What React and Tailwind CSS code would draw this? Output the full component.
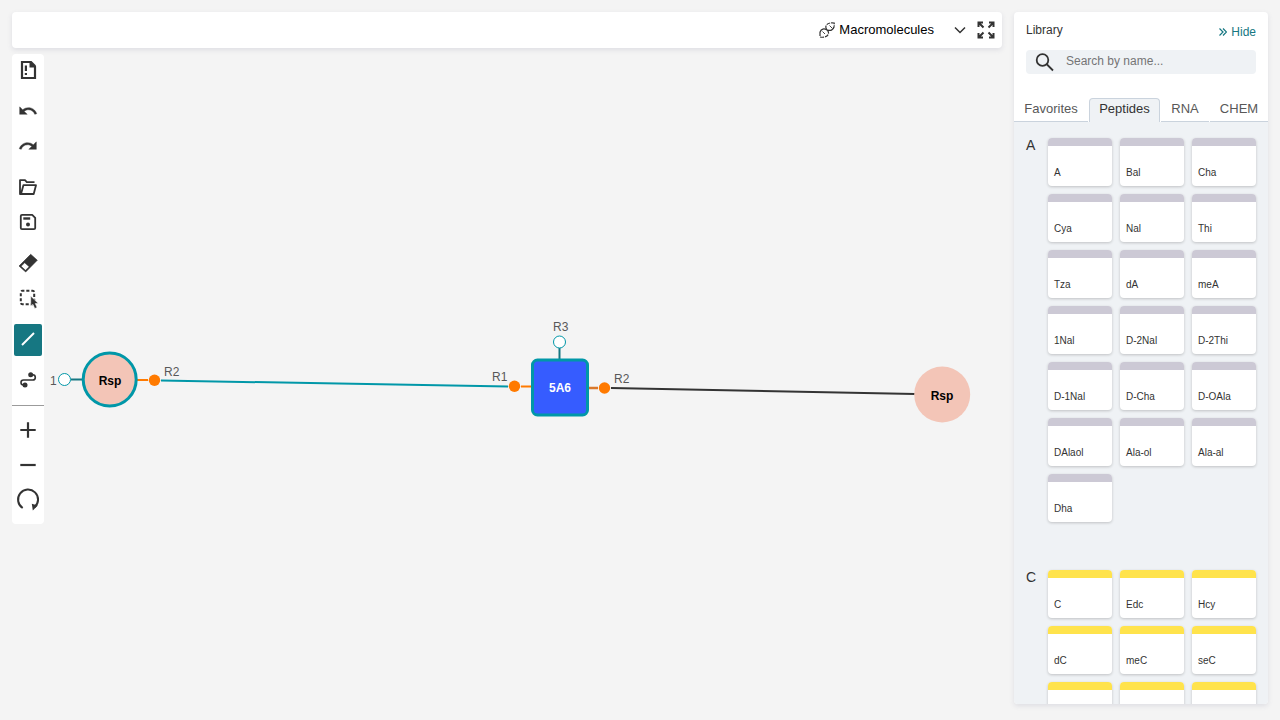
import React from "react";

const sections = [
  {
    letter: "A",
    bar: "bg-[#ccc9d5]",
    items: ["A", "Bal", "Cha", "Cya", "Nal", "Thi", "Tza", "dA", "meA", "1Nal", "D-2Nal", "D-2Thi", "D-1Nal", "D-Cha", "D-OAla", "DAlaol", "Ala-ol", "Ala-al", "Dha"],
  },
  {
    letter: "C",
    bar: "bg-[#ffe34c]",
    items: ["C", "Edc", "Hcy", "dC", "meC", "seC", "", "", ""],
  },
];

function Icon({ children, className = "size-6" }) {
  return (
    <svg viewBox="0 0 24 24" className={className} fill="none" stroke="currentColor" strokeWidth="2" aria-hidden="true">
      {children}
    </svg>
  );
}

function Tool({ label, active, children }) {
  return (
    <button
      type="button"
      aria-label={label}
      aria-pressed={active}
      className={
        active
          ? "flex h-8 w-7 items-center justify-center rounded-xs bg-[#167782] text-white"
          : "flex h-8 w-7 items-center justify-center rounded-xs text-[#333333]"
      }
    >
      {children}
    </button>
  );
}

function Group({ children }) {
  return <div className="flex flex-col items-center gap-[3px]">{children}</div>;
}

function Toolbar() {
  return (
    <nav aria-label="Tools" className="flex w-8 shrink-0 flex-col gap-[9px] self-start rounded bg-white pb-2">
      <Group>
        <Tool label="Clear canvas">
          <Icon>
            <path d="M14.500 4H6v16h13V8.500" strokeWidth="2.200" />
            <path d="M13.500 3h2l4.500 4.500V9.500h-6.500z" fill="currentColor" stroke="none" />
            <path d="M9.900 7.500v5.500M9.900 15v2" strokeWidth="2.200" />
          </Icon>
        </Tool>
      </Group>
      <Group>
        <Tool label="Undo">
          <Icon className="size-5">
            <path fill="currentColor" strokeWidth="0.500" d="M12.5 8c-2.65 0-5.05.99-6.9 2.6L2 7v9h9l-3.62-3.62c1.39-1.16 3.16-1.88 5.12-1.88 3.54 0 6.55 2.31 7.6 5.5l2.37-.78C21.08 11.03 17.15 8 12.5 8z" />
          </Icon>
        </Tool>
        <Tool label="Redo">
          <Icon className="size-5">
            <path fill="currentColor" strokeWidth="0.500" d="M18.4 10.600C16.550 8.990 14.150 8 11.500 8c-4.650 0-8.580 3.030-9.960 7.220L3.900 16c1.050-3.190 4.050-5.500 7.600-5.500 1.950 0 3.730.720 5.120 1.880L13 16h9V7l-3.600 3.600z" />
          </Icon>
        </Tool>
      </Group>
      <Group>
        <Tool label="Open">
          <Icon>
            <path strokeWidth="1.800" strokeLinejoin="round" d="M5 19H4V5.200h5l1.800 2H18.500M7.400 10.200H20L17.700 19H5z" />
          </Icon>
        </Tool>
        <Tool label="Save">
          <Icon>
            <path strokeWidth="1.800" strokeLinejoin="round" d="M6 4.800h10.200l3 3V18a1.200 1.200 0 0 1-1.200 1.200H6A1.200 1.200 0 0 1 4.800 18V6A1.200 1.200 0 0 1 6 4.800z" />
            <path d="M7.300 8.500h6.900" strokeWidth="2.400" />
            <circle cx="12" cy="14.600" r="2" fill="currentColor" stroke="none" />
          </Icon>
        </Tool>
      </Group>
      <Group>
        <Tool label="Erase">
          <Icon>
            <path fill="currentColor" strokeWidth="0.600" strokeLinejoin="round" fillRule="evenodd" d="M14.700 3.300 21.300 9.200 9.700 21 3 15zM8.700 11.700 5 15.300l4.500 4 3.700-3.600z" />
          </Icon>
        </Tool>
        <Tool label="Select">
          <Icon>
            <rect x="4.800" y="4.800" width="13.400" height="13.400" rx="1.500" strokeWidth="2" strokeDasharray="3.100 1.900" strokeDashoffset="1" />
            <path fill="currentColor" stroke="white" strokeWidth="0.600" d="M14.700 10v10l2.200-1.700 1.800 4.200 2.400-1-1.800-4h3z" />
          </Icon>
        </Tool>
      </Group>
      <div className="flex flex-col items-center gap-2 pt-px">
        <Tool label="Single bond" active>
          <Icon>
            <path strokeWidth="2" d="M6 17 18 5" />
          </Icon>
        </Tool>
        <Tool label="Snake mode">
          <Icon>
            <path strokeWidth="1.600" d="M15 6.800h1.700a2.600 2.600 0 0 1 0 5.200H7.500a2.500 2.500 0 0 0 0 5H9" />
            <circle cx="14.700" cy="6.800" r="2.500" fill="currentColor" stroke="none" />
            <circle cx="9" cy="17" r="2.500" fill="currentColor" stroke="none" />
          </Icon>
        </Tool>
      </div>
      <hr className="-mb-px border-[#9b9b9b]" />
      <Group>
        <Tool label="Zoom in">
          <Icon>
            <path d="M12 4.300v15.400M4.300 12h15.400" strokeWidth="2.200" />
          </Icon>
        </Tool>
        <Tool label="Zoom out">
          <Icon>
            <path d="M4.300 12h15.400" strokeWidth="2.200" />
          </Icon>
        </Tool>
        <Tool label="Reset zoom">
          <Icon>
            <path strokeWidth="2" d="M6.700 20a10 10 0 1 1 11.800-.8" />
            <path fill="currentColor" stroke="none" d="m15.800 15.800 6 1.800-5 4.800z" />
          </Icon>
        </Tool>
      </Group>
    </nav>
  );
}

function Header() {
  return (
    <header className="flex h-9 shrink-0 items-center justify-end rounded bg-white pr-1.5 shadow-[0_2px_5px_rgba(103,104,132,0.15)]">
      <button type="button" className="flex items-center gap-1 text-[13px] text-black">
        <svg viewBox="0 0 16 16" className="size-4" fill="none" stroke="#333333" aria-hidden="true">
          <path strokeWidth="1.300" d="M1 10C2.500 6.500 5 6.300 8 7.800c3.500 1.500 6 .5 7.200-3.300" />
          <path strokeWidth="1.200" strokeDasharray="4 1" d="M1 10v5c4.500.8 8-.5 8.500-3.500.3-2-.5-2.700-1.500-3.700C7 6.500 6.500 5.500 7 4c.8-2.700 4-3.500 8.200-3v3.500" />
          <path strokeWidth="0.900" d="M3.500 9.500 6 12M10.500 3.500 13 6" />
        </svg>
        <span>Macromolecules</span>
        <svg viewBox="0 0 12 12" className="ml-4 size-3" fill="none" stroke="#333333" strokeWidth="1.500" aria-hidden="true">
          <path d="M1 3.500l5 5 5-5" />
        </svg>
      </button>
      <button type="button" aria-label="Fullscreen" className="ml-2.5 text-[#333333]">
        <svg viewBox="0 0 20 20" className="size-5" fill="none" stroke="currentColor" strokeWidth="2" aria-hidden="true">
          <path d="M2.500 7V2.500H7M2.500 2.500l5 5M13 2.500h4.500V7M17.500 2.500l-5 5M2.500 13v4.500H7M2.500 17.500l5-5M13 17.500h4.500V13M17.500 17.500l-5-5" />
        </svg>
      </button>
    </header>
  );
}

function Canvas() {
  return (
    <svg className="h-full min-w-0 flex-1 text-[12px]" role="img" aria-label="Structure canvas">
      <g transform="translate(-50 -54)">
        <g fill="none" strokeWidth="2">
          <path d="M161 380.500 508 386.500" stroke="#0097a8" />
          <path d="M611 388 915 394" stroke="#333333" />
          <path d="M71 379.500h12M559.500 348v12" stroke="#167782" />
          <path d="M137 380h11M521 386.500h11" stroke="#ff7a00" />
          <path d="M588 388h10" stroke="#d9782b" strokeWidth="2.500" />
        </g>
        <g fill="white" stroke="#0097a8">
          <circle cx="64.500" cy="379.500" r="6" />
          <circle cx="559.500" cy="342" r="6" />
        </g>
        <g fill="#ff7a00">
          <circle cx="154.500" cy="380.300" r="5.700" />
          <circle cx="514.500" cy="386.300" r="5.700" />
          <circle cx="604.500" cy="388" r="5.700" />
        </g>
        <circle cx="109.700" cy="379.500" r="26.500" fill="#f3c5b7" stroke="#0097a8" strokeWidth="3" />
        <circle cx="942.200" cy="394.500" r="28" fill="#f3c5b7" />
        <rect x="532.500" y="360" width="55" height="55" rx="5" fill="#365cff" stroke="#0097a8" strokeWidth="3" />
        <g fontWeight="700" textAnchor="middle">
          <text x="110" y="385">Rsp</text>
          <text x="942" y="400">Rsp</text>
          <text x="560" y="392" fill="white">5A6</text>
        </g>
        <g fill="#585858">
          <text x="50" y="385">1</text>
          <text x="164" y="376">R2</text>
          <text x="492" y="381">R1</text>
          <text x="553" y="331">R3</text>
          <text x="614" y="383">R2</text>
        </g>
      </g>
    </svg>
  );
}

function Tabs() {
  const idle = "border-b border-[#cad3dd] pt-[3px] pb-1 text-[#585858]";
  return (
    <div role="tablist" className="mt-6 flex gap-px text-[13px] leading-4">
      <button type="button" role="tab" aria-selected="false" className={`${idle} w-[74px]`}>Favorites</button>
      <button type="button" role="tab" aria-selected="true" className="w-[71px] rounded-t border border-b-0 border-[#cad3dd] bg-[#eff2f5] pt-[2px] pb-[5px] text-[#333333]">Peptides</button>
      <button type="button" role="tab" aria-selected="false" className={`${idle} w-12`}>RNA</button>
      <button type="button" role="tab" aria-selected="false" className={`${idle} flex-1`}>CHEM</button>
    </div>
  );
}

function Library() {
  return (
    <aside className="flex w-[254px] shrink-0 flex-col overflow-hidden rounded bg-white shadow-[0_2px_5px_rgba(103,104,132,0.15)]">
      <div className="flex items-start justify-between px-3 pt-2.5 text-xs">
        <h1 className="text-[#333333]">Library</h1>
        <button type="button" className="mt-0.5 flex items-center gap-1 text-[#167782]">
          <svg viewBox="0 0 8 8" className="size-2" fill="none" stroke="currentColor" strokeWidth="1.200" aria-hidden="true">
            <path d="M.5.500 4 4 .5 7.500M4 .5 7.500 4 4 7.500" />
          </svg>
          Hide
        </button>
      </div>
      <label className="mx-3 mt-2.5 flex h-6 shrink-0 items-center gap-3 rounded bg-[#eff2f5] pl-2">
        <svg viewBox="0 0 20 20" className="size-5 shrink-0 text-[#333333]" fill="none" stroke="currentColor" strokeWidth="1.800" aria-hidden="true">
          <circle cx="8.500" cy="8" r="5.800" />
          <path d="m12.500 12 6.500 6.500" />
        </svg>
        <input type="text" aria-label="Search by name" placeholder="Search by name..." className="w-full min-w-0 bg-transparent pb-0.5 text-xs outline-none placeholder:text-[#757575]" />
      </label>
      <Tabs />
      <div className="flex min-h-0 flex-1 flex-col gap-12 overflow-hidden bg-[#eff2f5] px-3 pt-4">
        {sections.map((section) => (
          <section key={section.letter} className="flex shrink-0 justify-between">
            <h2 className="text-sm leading-[14px] text-[#333333]">{section.letter}</h2>
            <div className="grid grid-cols-[repeat(3,64px)] gap-2">
              {section.items.map((name, index) => (
                <button
                  key={index}
                  type="button"
                  className="flex h-12 flex-col justify-between overflow-hidden rounded bg-white pb-[5px] text-left text-[10px] leading-4 text-[#333333] shadow-[0_1px_3px_rgba(0,0,0,0.2)]"
                >
                  <span className={`h-2 w-full ${section.bar}`} />
                  <span className="px-1.5">{name}</span>
                </button>
              ))}
            </div>
          </section>
        ))}
      </div>
    </aside>
  );
}

export default function App() {
  return (
    <div className="flex h-screen gap-3 overflow-hidden bg-[#f4f4f4] px-3 pt-3 pb-4 font-['Liberation_Sans',Arial,sans-serif]">
      <main className="flex min-w-0 flex-1 flex-col gap-1.5">
        <Header />
        <div className="flex min-h-0 flex-1 gap-1.5">
          <Toolbar />
          <Canvas />
        </div>
      </main>
      <Library />
    </div>
  );
}
